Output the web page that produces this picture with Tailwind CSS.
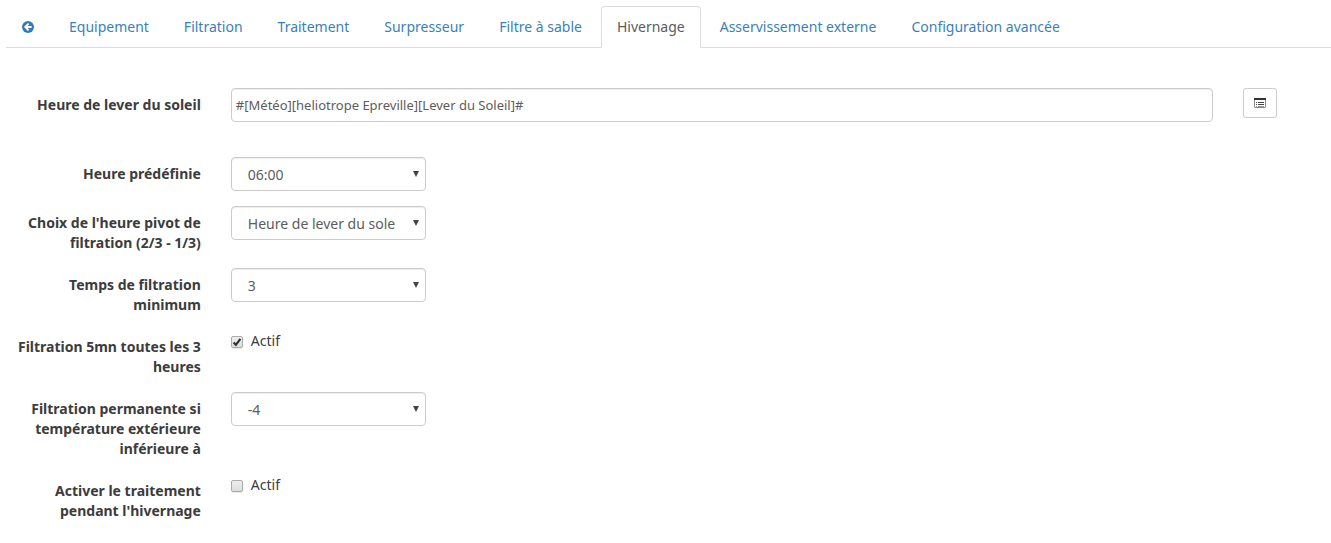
<!DOCTYPE html>
<html lang="fr">
<head>
<meta charset="utf-8">
<title>Hivernage</title>
<script src="https://cdn.jsdelivr.net/npm/@tailwindcss/browser@4"></script>
</head>
<body class="bg-white font-['Noto_Sans',sans-serif] text-sm leading-5 text-[#3c3c3c]">
<div class="overflow-x-hidden pt-1.5">
  <nav class="ml-1.5 flex gap-[3px] border-b border-[#ddd] text-[#3a7fbc]">
    <a href="#" aria-label="Retour" class="-mb-px flex items-center rounded-t border border-transparent px-[15px] py-2.5">
      <svg class="size-3" viewBox="0 0 12 12" aria-hidden="true"><circle cx="6" cy="6" r="6" fill="#337ab7"/><path d="M9.6 6H3.4M6.6 2.6 3.2 6l3.4 3.4" fill="none" stroke="#fff" stroke-width="1.8"/></svg>
    </a>
    <a href="#" class="-mb-px rounded-t border border-transparent px-[15px] py-2.5">Equipement</a>
    <a href="#" class="-mb-px rounded-t border border-transparent px-[15px] py-2.5">Filtration</a>
    <a href="#" class="-mb-px rounded-t border border-transparent px-[15px] py-2.5">Traitement</a>
    <a href="#" class="-mb-px rounded-t border border-transparent px-[15px] py-2.5">Surpresseur</a>
    <a href="#" class="-mb-px rounded-t border border-transparent px-[15px] py-2.5">Filtre à sable</a>
    <a href="#" aria-current="page" class="-mb-px rounded-t border border-[#ddd] border-b-white bg-white px-[15px] py-2.5 text-[#5c5c5c]">Hivernage</a>
    <a href="#" class="-mb-px rounded-t border border-transparent px-[15px] py-2.5">Asservissement externe</a>
    <a href="#" class="-mb-px rounded-t border border-transparent px-[15px] py-2.5">Configuration avancée</a>
  </nav>

  <form class="-mx-[9px] mt-10 flex flex-col gap-[15px]">
    <div class="mb-5 grid grid-cols-12 items-start">
      <label for="lever" class="col-span-2 px-[15px] pt-[7px] text-right font-bold">Heure de lever du soleil</label>
      <div class="col-span-9 px-[15px]">
        <input id="lever" type="text" value="#[Météo][heliotrope Epreville][Lever du Soleil]#" class="block h-[34px] w-full rounded border border-[#ccc] bg-white px-1 text-[13px] text-[#5c5c5c] shadow-[inset_0_1px_1px_rgba(0,0,0,0.075)]">
      </div>
      <div class="px-[15px]">
        <button type="button" aria-label="Choisir une commande" class="flex h-[30px] w-[34px] items-center justify-center rounded-[3px] border border-[#ccc] bg-white">
          <svg class="h-2.5 w-3" viewBox="0 0 12 10" aria-hidden="true"><rect x=".5" y=".5" width="11" height="9" rx=".5" fill="#fff" stroke="#888"/><path d="M0 0h12v2H0z" fill="#333"/><path d="M2 4.5h1M4 4.5h6M2 6.5h1M4 6.5h6" stroke="#444" stroke-width="1"/><path d="M2 8.5h1M4 8.5h6" stroke="#999" stroke-width="1"/></svg>
        </button>
      </div>
    </div>

    <div class="grid grid-cols-12 items-start">
      <label for="heure" class="col-span-2 px-[15px] pt-[7px] text-right font-bold">Heure prédéfinie</label>
      <div class="col-span-2 px-[15px]">
        <div class="relative">
          <select id="heure" class="block h-[34px] w-full appearance-none rounded border border-[#ccc] bg-white pt-0.5 pr-[29px] pl-4 text-[#5c5c5c] shadow-[inset_0_1px_1px_rgba(0,0,0,0.075)]"><option>06:00</option></select>
          <svg class="pointer-events-none absolute top-3.5 right-[7px] size-1.5" viewBox="0 0 6 6" aria-hidden="true"><path d="M0 0h6L3 6z" fill="#444"/></svg>
        </div>
      </div>
    </div>

    <div class="grid grid-cols-12 items-start">
      <label for="pivot" class="col-span-2 px-[15px] pt-[7px] text-right font-bold">Choix de l'heure pivot de filtration (2/3 - 1/3)</label>
      <div class="col-span-2 px-[15px]">
        <div class="relative">
          <select id="pivot" class="block h-[34px] w-full appearance-none rounded border border-[#ccc] bg-white pt-0.5 pr-[29px] pl-4 text-[#5c5c5c] shadow-[inset_0_1px_1px_rgba(0,0,0,0.075)]"><option>Heure de lever du soleil</option></select>
          <svg class="pointer-events-none absolute top-3.5 right-[7px] size-1.5" viewBox="0 0 6 6" aria-hidden="true"><path d="M0 0h6L3 6z" fill="#444"/></svg>
        </div>
      </div>
    </div>

    <div class="grid grid-cols-12 items-start">
      <label for="temps" class="col-span-2 px-[15px] pt-[7px] text-right font-bold">Temps de filtration minimum</label>
      <div class="col-span-2 px-[15px]">
        <div class="relative">
          <select id="temps" class="block h-[34px] w-full appearance-none rounded border border-[#ccc] bg-white pt-0.5 pr-[29px] pl-4 text-[#5c5c5c] shadow-[inset_0_1px_1px_rgba(0,0,0,0.075)]"><option>3</option></select>
          <svg class="pointer-events-none absolute top-3.5 right-[7px] size-1.5" viewBox="0 0 6 6" aria-hidden="true"><path d="M0 0h6L3 6z" fill="#444"/></svg>
        </div>
      </div>
    </div>

    <div class="grid grid-cols-12 items-start">
      <div id="cinq" class="col-span-2 px-[15px] pt-[7px] text-right font-bold">Filtration 5mn toutes les 3 heures</div>
      <div class="col-span-2 px-[15px]">
        <label class="flex items-start gap-2 pt-px">
          <span class="relative mt-[5px] block size-3">
            <input type="checkbox" checked aria-describedby="cinq" class="peer block size-3 appearance-none rounded-[2px] border border-[#aaa] bg-linear-to-b from-[#eee] to-[#ddd] shadow-[0_1px_1px_rgba(0,0,0,0.1)]">
            <svg class="pointer-events-none invisible absolute inset-0 size-3 peer-checked:visible" viewBox="0 0 12 12" aria-hidden="true"><path d="M2.6 6.4 4.9 8.8 9.4 2.8" fill="none" stroke="#333" stroke-width="2.2"/></svg>
          </span>
          Actif
        </label>
      </div>
    </div>

    <div class="grid grid-cols-12 items-start">
      <label for="temp" class="col-span-2 px-[15px] pt-[7px] text-right font-bold">Filtration permanente si température extérieure inférieure à</label>
      <div class="col-span-2 px-[15px]">
        <div class="relative">
          <select id="temp" class="block h-[34px] w-full appearance-none rounded border border-[#ccc] bg-white pt-0.5 pr-[29px] pl-4 text-[#5c5c5c] shadow-[inset_0_1px_1px_rgba(0,0,0,0.075)]"><option>-4</option></select>
          <svg class="pointer-events-none absolute top-3.5 right-[7px] size-1.5" viewBox="0 0 6 6" aria-hidden="true"><path d="M0 0h6L3 6z" fill="#444"/></svg>
        </div>
      </div>
    </div>

    <div class="grid grid-cols-12 items-start">
      <div id="traitement" class="col-span-2 px-[15px] pt-[7px] text-right font-bold">Activer le traitement pendant l'hivernage</div>
      <div class="col-span-2 px-[15px]">
        <label class="flex items-start gap-2 pt-px">
          <span class="relative mt-[5px] block size-3">
            <input type="checkbox" aria-describedby="traitement" class="peer block size-3 appearance-none rounded-[2px] border border-[#aaa] bg-linear-to-b from-[#eee] to-[#ddd] shadow-[0_1px_1px_rgba(0,0,0,0.1)]">
            <svg class="pointer-events-none invisible absolute inset-0 size-3 peer-checked:visible" viewBox="0 0 12 12" aria-hidden="true"><path d="M2.6 6.4 4.9 8.8 9.4 2.8" fill="none" stroke="#333" stroke-width="2.2"/></svg>
          </span>
          Actif
        </label>
      </div>
    </div>
  </form>
</div>
</body>
</html>
